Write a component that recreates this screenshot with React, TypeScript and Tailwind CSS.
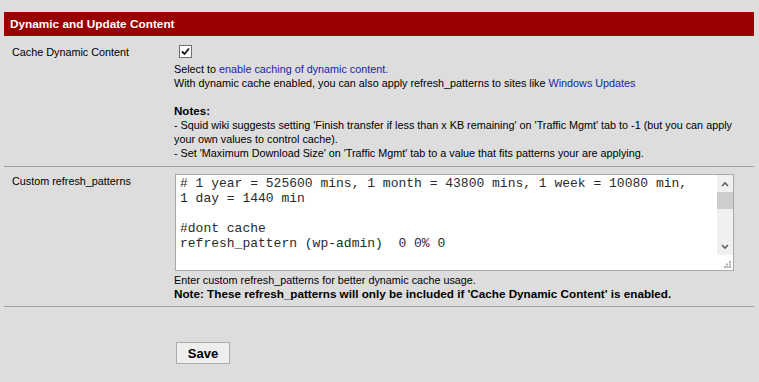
const FONT = { fontFamily: '"Liberation Sans", Arial, sans-serif' }
const MONO = { fontFamily: '"Liberation Mono", "Courier New", monospace' }

const PATTERN_LINES = [
  '# 1 year = 525600 mins, 1 month = 43800 mins, 1 week = 10080 min,',
  '1 day = 1440 min',
  '',
  '#dont cache',
  'refresh_pattern (wp-admin)  0 0% 0',
]

function CheckBox() {
  return (
    <div className="w-[13px] h-[13px] bg-white border border-[#707070] flex items-center justify-center">
      <svg width="9" height="9" viewBox="0 0 9 9">
        <path d="M1 4.5 L3.5 7 L8 1.5" stroke="#111" strokeWidth="1.8" fill="none" />
      </svg>
    </div>
  )
}

function FakeScrollbar() {
  return (
    <div className="w-[16px] flex flex-col">
      <div className="h-[80px] bg-[#f0f0f0] flex flex-col">
        <div className="h-[17px] flex items-center justify-center">
          <svg width="8" height="6" viewBox="0 0 8 6">
            <path d="M1 5 L4 2 L7 5" stroke="#606060" strokeWidth="1.6" fill="none" />
          </svg>
        </div>
        <div className="h-[17px] bg-[#cdcdcd]" />
        <div className="flex-1" />
        <div className="h-[17px] flex items-center justify-center">
          <svg width="8" height="6" viewBox="0 0 8 6">
            <path d="M1 1 L4 4 L7 1" stroke="#606060" strokeWidth="1.6" fill="none" />
          </svg>
        </div>
      </div>
      <div className="flex-1 bg-white flex items-end justify-end pr-[2px] pb-[2px]">
        <svg width="7" height="7" viewBox="0 0 7 7" fill="#b0b0b0">
          <rect x="5" y="0" width="2" height="2" />
          <rect x="2" y="2.5" width="2" height="2" />
          <rect x="5" y="2.5" width="2" height="2" />
          <rect x="0" y="5" width="2" height="2" />
          <rect x="2.5" y="5" width="2" height="2" />
          <rect x="5" y="5" width="2" height="2" />
        </svg>
      </div>
    </div>
  )
}

export default function App() {
  return (
    <div className="w-[759px] h-[382px] bg-[#dddddd] pt-3 pl-1 text-[10.8px] text-black leading-[14px]" style={FONT}>
      <div className="w-[750px]">
        <div className="h-6 bg-[#990000] text-white font-bold text-[11.8px] pl-[6px] flex items-center">
          Dynamic and Update Content
        </div>

        <div className="flex pt-[9px] pb-[6px] border-b border-[#a0a0a0]">
          <div className="w-[170px] pl-2 shrink-0">Cache Dynamic Content</div>
          <div className="flex flex-col">
            <div className="ml-[5px] mb-[4px]">
              <CheckBox />
            </div>
            <p className="whitespace-nowrap">
              Select to <span className="text-[#2222a8]">enable caching of dynamic content.</span>
            </p>
            <p className="whitespace-nowrap">
              With dynamic cache enabled, you can also apply refresh_patterns to sites like{' '}
              <span className="text-[#2222a8]">Windows Updates</span>
            </p>
            <p className="h-[14px]" />
            <p className="font-bold text-[11.6px]">Notes:</p>
            <p className="whitespace-nowrap">
              - Squid wiki suggests setting 'Finish transfer if less than x KB remaining' on 'Traffic Mgmt' tab to -1 (but you can apply
            </p>
            <p>your own values to control cache).</p>
            <p className="whitespace-nowrap">
              - Set 'Maximum Download Size' on 'Traffic Mgmt' tab to a value that fits patterns your are applying.
            </p>
          </div>
        </div>

        <div className="flex pt-[7px] pb-[5px] border-b border-[#a0a0a0]">
          <div className="w-[170px] pl-2 shrink-0">Custom refresh_patterns</div>
          <div className="flex flex-col">
            <div className="ml-px w-[559px] h-[97px] bg-white border border-[#a9a9a9] flex">
              <div className="flex-1 pl-[4px] pt-[1px] text-[13px] leading-[15px] text-[#2a2a2a]" style={MONO}>
                {PATTERN_LINES.map((line, i) => (
                  <div key={i} className="whitespace-pre h-[15px]">{line}</div>
                ))}
              </div>
              <FakeScrollbar />
            </div>
            <p className="mt-[2px] whitespace-nowrap">Enter custom refresh_patterns for better dynamic cache usage.</p>
            <p className="font-bold text-[11.7px] whitespace-nowrap">
              Note: These refresh_patterns will only be included if 'Cache Dynamic Content' is enabled.
            </p>
          </div>
        </div>

        <div className="pl-[172px] pt-[35px]">
          <button className="w-[54px] h-[22px] bg-[#eeeeee] border border-[#ababab] font-bold text-[13px] leading-none">
            Save
          </button>
        </div>
      </div>
    </div>
  )
}
